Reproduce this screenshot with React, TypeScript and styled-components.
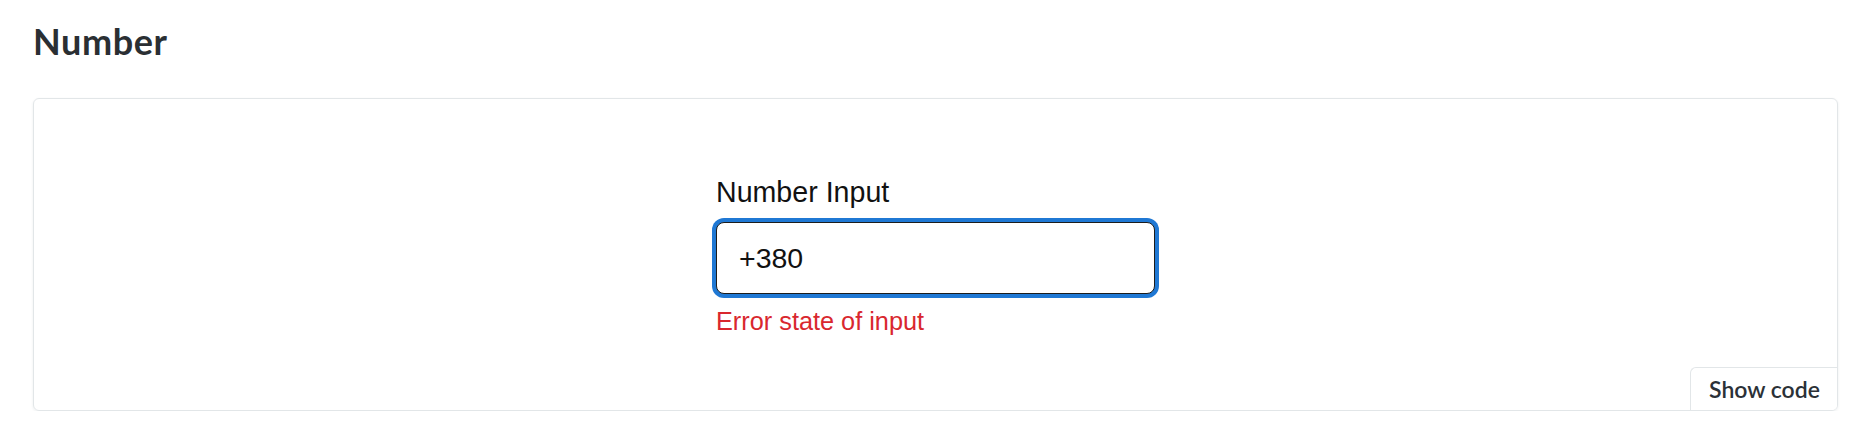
import React from "react";
import styled, { createGlobalStyle } from "styled-components";

const GlobalStyle = createGlobalStyle`
  html, body {
    margin: 0;
    padding: 0;
    background: #ffffff;
  }
  body {
    font-family: "Liberation Sans", Arial, sans-serif;
  }
`;

const Page = styled.div`
  padding: 20px 21px 0 33px;
  display: flex;
  flex-direction: column;
`;

const Title = styled.h2`
  margin: 0 0 35px 0;
  font-family: Lato, "Noto Sans", sans-serif;
  font-weight: 700;
  font-size: 36px;
  letter-spacing: 0.6px;
  line-height: 1.2;
  color: #2a2f33;
`;

const Card = styled.section`
  box-sizing: border-box;
  height: 313px;
  border: 1px solid #e2e6e8;
  border-radius: 6px;
  box-shadow: 0 1px 3px rgba(30, 50, 70, 0.08);
  display: flex;
  flex-direction: column;
  align-items: center;
  padding-top: 77px;
  overflow: hidden;
`;

const Field = styled.div`
  width: 439px;
  display: flex;
  flex-direction: column;
  align-items: stretch;
`;

const Label = styled.label`
  font-family: "Liberation Sans", Arial, sans-serif;
  font-size: 28.6px;
  line-height: 32px;
  color: #111111;
  margin-bottom: 14px;
`;

const Input = styled.input`
  box-sizing: border-box;
  height: 72px;
  width: 100%;
  padding: 0 20px 0 22px;
  font-family: "Liberation Sans", Arial, sans-serif;
  font-size: 28.5px;
  color: #111111;
  border: 1.5px solid #1c1c1c;
  border-radius: 8px;
  box-shadow: 0 0 0 4px #1f78d4;
  outline: none;
  background: #ffffff;
`;

const ErrorText = styled.div`
  margin-top: 13px;
  font-family: "Liberation Sans", Arial, sans-serif;
  font-size: 25.3px;
  line-height: 28px;
  color: #d9272e;
`;

const ShowCode = styled.button`
  margin-top: auto;
  align-self: flex-end;
  box-sizing: border-box;
  height: 43px;
  width: 147px;
  padding: 0 0 0 1px;
  background: #ffffff;
  border: none;
  border-top: 1px solid #e2e6e8;
  border-left: 1px solid #e2e6e8;
  border-radius: 6px 0 0 0;
  font-family: Lato, "Noto Sans", sans-serif;
  font-weight: 600;
  font-size: 23px;
  color: #2b3137;
  cursor: pointer;
`;

export default function App() {
  return (
    <>
      <GlobalStyle />
      <Page>
        <Title>Number</Title>
        <Card>
          <Field>
            <Label htmlFor="num">Number Input</Label>
            <Input id="num" type="text" defaultValue="+380" readOnly />
            <ErrorText>Error state of input</ErrorText>
          </Field>
          <ShowCode>Show code</ShowCode>
        </Card>
      </Page>
    </>
  );
}
